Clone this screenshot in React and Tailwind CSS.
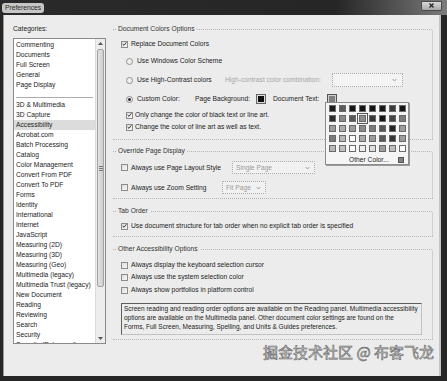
import React from 'react';

const topCats = ['Commenting', 'Documents', 'Full Screen', 'General', 'Page Display'];
const moreCats = [
  '3D & Multimedia', '3D Capture', 'Accessibility', 'Acrobat.com', 'Batch Processing', 'Catalog',
  'Color Management', 'Convert From PDF', 'Convert To PDF', 'Forms', 'Identity', 'International',
  'Internet', 'JavaScript', 'Measuring (2D)', 'Measuring (3D)', 'Measuring (Geo)', 'Multimedia (legacy)',
  'Multimedia Trust (legacy)', 'New Document', 'Reading', 'Reviewing', 'Search', 'Security', 'Security (Enhanced)',
];

// grayscale palette, 5 rows x 8 cols
const swatches = [
  ['#1c1c1c', '#5c5c5c', '#141414', '#161616', '#141414', '#181818', '#3c3c3c', '#161616'],
  ['#2c2c2c', '#8a8a8a', '#575757', '#8e8e8e', '#363636', '#141414', '#464646', '#7c7c7c'],
  ['#9c9c9c', '#ababab', '#9a9a9a', '#8a8a8a', '#7a7a7a', '#555555', '#242424', '#9c9c9c'],
  ['#7a7a7a', '#b7b7b7', '#fafafa', '#ababab', '#9a9a9a', '#585858', '#363636', '#9c9c9c'],
  ['#b7b7b7', '#bfbfbf', '#fafafa', '#eeeeee', '#dddddd', '#9c9c9c', '#bdbdbd', '#fafafa'],
];

const Check = ({ checked }) => (
  <span className="w-[7px] h-[7px] shrink-0 border border-[#8c8c8c] bg-gradient-to-br from-[#dedede] to-[#f7f7f7] flex items-center justify-center">
    {checked && (
      <svg width="6" height="6" viewBox="0 0 6 6">
        <path d="M0.8 3 L2.4 4.6 L5.3 0.9" fill="none" stroke="#2a2a2a" strokeWidth="1.1" />
      </svg>
    )}
  </span>
);

const Radio = ({ on }) => (
  <span className="w-[7px] h-[7px] shrink-0 rounded-full border border-[#8e8e8e] bg-[#f0f0f0] flex items-center justify-center">
    {on && <span className="w-[3px] h-[3px] rounded-full bg-[#2a2a2a]" />}
  </span>
);

const Chevron = () => (
  <svg width="5" height="4" viewBox="0 0 5 4">
    <path d="M0.6 1 L2.5 3 L4.4 1" fill="none" stroke="#9a9a9a" strokeWidth="0.9" />
  </svg>
);

const Select = ({ w, label }) => (
  <div className={`${w} h-[13px] border border-dotted border-[#a9a9a9] bg-[#f1f1f1] rounded-[1px] flex items-center justify-between pl-[3px] pr-[4px] text-[#9b9b9b]`}>
    <span>{label}</span>
    <Chevron />
  </div>
);

export default function App() {
  return (
    <div className="w-[447px] h-[381px] bg-[#262626] flex flex-col overflow-hidden font-['Liberation_Sans','Arial',sans-serif] text-[6.7px] leading-[10px] text-[#222]">
      {/* title bar */}
      <div className="h-[15px] shrink-0 flex items-center justify-between pl-[2px] pr-[5px] bg-gradient-to-r from-[#2a2a2a] via-[#262626] via-75% to-[#7c7c7c]">
        <div className="h-[10px] px-[3px] rounded-[3px] bg-[#c6c6c6] text-[#2a2a2a]">Preferences</div>
        <div className="w-[21px] h-[10px] -mt-[4px] bg-gradient-to-b from-[#d8d8d8] to-[#a8a8a8] border border-[#4a4a4a] rounded-b-[2px] flex items-center justify-center">
          <svg width="5" height="5" viewBox="0 0 5 5">
            <path d="M0.5 0.5 L4.5 4.5 M4.5 0.5 L0.5 4.5" stroke="#222" strokeWidth="1.2" />
          </svg>
        </div>
      </div>

      {/* dialog body */}
      <div className="flex-1 flex ml-[3px] mr-[6px] mb-[5px] pt-[9px] pl-[9px] bg-[#ececec] border-l border-[#9c9c9c] border-r-2 border-r-[#c4c4c4] relative">
        {/* categories */}
        <div className="w-[93px] shrink-0 flex flex-col">
          <div>Categories:</div>
          <div className="mt-[4px] h-[306px] border border-[#8a8a8a] bg-white flex overflow-hidden">
            <div className="flex-1 pt-[1px] overflow-hidden">
              {topCats.map((c) => (
                <div key={c} className="h-[10px] pl-[2px] whitespace-nowrap">{c}</div>
              ))}
              <div className="mt-[7px] mb-[2px] mx-[2px] h-px bg-[#acacac]" />
              {moreCats.map((c) => (
                <div key={c} className={`h-[10px] pl-[2px] whitespace-nowrap ${c === 'Accessibility' ? 'bg-[#dcdcdc]' : ''}`}>{c}</div>
              ))}
            </div>
            <div className="w-[10px] shrink-0 border-l border-[#dadada] bg-[#ededed] flex flex-col">
              <div className="h-[9px] flex items-center justify-center">
                <svg width="5" height="3" viewBox="0 0 5 3"><path d="M0 3 L2.5 0 L5 3 Z" fill="#555" /></svg>
              </div>
              <div className="mt-[1px] mx-[1px] h-[238px] rounded-[2px] border border-[#a2a2a2] bg-gradient-to-r from-[#e2e2e2] to-[#cfcfcf] flex flex-col items-center justify-center gap-[1px]">
                <span className="w-[4px] h-px bg-[#777]" />
                <span className="w-[4px] h-px bg-[#777]" />
                <span className="w-[4px] h-px bg-[#777]" />
              </div>
              <div className="flex-1" />
              <div className="h-[9px] flex items-center justify-center">
                <svg width="5" height="3" viewBox="0 0 5 3"><path d="M0 0 L2.5 3 L5 0 Z" fill="#555" /></svg>
              </div>
            </div>
          </div>
        </div>

        {/* options */}
        <div className="w-[320px] ml-[7px] flex flex-col relative">
          <fieldset className="border-t border-r border-b border-dotted border-[#b4b4b4] rounded-tr-[3px] pb-[7px]">
            <legend className="ml-[3px] px-[2px] text-[#333]">Document Colors Options</legend>
            <div className="mt-[5px] pl-[8px] h-[10px] flex items-center gap-[3px]">
              <Check checked />
              <span>Replace Document Colors</span>
            </div>
            <div className="mt-[7px] pl-[13px] h-[10px] flex items-center gap-[4px]">
              <Radio />
              <span>Use Windows Color Scheme</span>
            </div>
            <div className="mt-[7px] pl-[13px] h-[14px] flex items-center">
              <Radio />
              <span className="ml-[4px] w-[88px]">Use High-Contrast colors</span>
              <span className="w-[107px] text-[#a6a6a6]">High-contrast color combination:</span>
              <div className="w-[71px] h-[14px] border border-dotted border-[#a9a9a9] bg-[#f3f3f3] flex items-center justify-end pr-[5px]">
                <Chevron />
              </div>
            </div>
            <div className="mt-[7px] pl-[13px] h-[10px] flex items-center">
              <Radio on />
              <span className="ml-[4px] w-[58px]">Custom Color:</span>
              <span className="w-[61px]">Page Background:</span>
              <span className="w-[10px] h-[10px] border border-[#666] bg-[#111] shadow-[inset_0_0_0_1px_#ddd]" />
              <span className="ml-[7px] w-[54px]">Document Text:</span>
              <span className="w-[10px] h-[10px] border border-[#555] bg-[#808080] shadow-[inset_0_0_0_1px_#cfcfcf]" />
            </div>
            <div className="mt-[6px] pl-[13px] h-[10px] flex items-center gap-[2px]">
              <Check checked />
              <span>Only change the color of black text or line art.</span>
            </div>
            <div className="mt-[2px] pl-[13px] h-[10px] flex items-center gap-[2px]">
              <Check checked />
              <span>Change the color of line art as well as text.</span>
            </div>
          </fieldset>

          <fieldset className="mt-[6px] border-t border-r border-b border-dotted border-[#b4b4b4] rounded-tr-[3px] pb-[4px]">
            <legend className="ml-[3px] px-[2px] text-[#333]">Override Page Display</legend>
            <div className="mt-[5px] pl-[8px] h-[13px] flex items-center">
              <Check />
              <span className="ml-[3px] w-[101px]">Always use Page Layout Style</span>
              <Select w="w-[83px]" label="Single Page" />
            </div>
            <div className="mt-[7px] pl-[8px] h-[13px] flex items-center">
              <Check />
              <span className="ml-[3px] w-[91px]">Always use Zoom Setting</span>
              <Select w="w-[44px]" label="Fit Page" />
            </div>
          </fieldset>

          <fieldset className="mt-[7px] border-t border-r border-b border-dotted border-[#b4b4b4] rounded-tr-[3px] pb-[5px]">
            <legend className="ml-[3px] px-[2px] text-[#333]">Tab Order</legend>
            <div className="mt-[5px] pl-[8px] h-[10px] flex items-center gap-[3px]">
              <Check checked />
              <span>Use document structure for tab order when no explicit tab order is specified</span>
            </div>
          </fieldset>

          <fieldset className="mt-[7px] border-t border-r border-b border-dotted border-[#b4b4b4] rounded-tr-[3px] pb-[4px]">
            <legend className="ml-[3px] px-[2px] text-[#333]">Other Accessibility Options</legend>
            <div className="mt-[6px] pl-[8px] h-[10px] flex items-center gap-[3px]">
              <Check />
              <span>Always display the keyboard selection cursor</span>
            </div>
            <div className="mt-[2px] pl-[8px] h-[10px] flex items-center gap-[3px]">
              <Check />
              <span>Always use the system selection color</span>
            </div>
            <div className="mt-[3px] pl-[8px] h-[10px] flex items-center gap-[3px]">
              <Check />
              <span>Always show portfolios in platform control</span>
            </div>
            <div className="mt-[8px] ml-[8px] w-[301px] h-[32px] border-t border-l border-[#5e5e5e] border-r border-b border-r-[#c2c2c2] border-b-[#c2c2c2] pl-[2px] pt-[1px] text-[6.5px] leading-[8.8px] whitespace-nowrap">
              Screen reading and reading order options are available on the Reading panel. Multimedia accessibility<br />
              options are available on the Multimedia panel. Other document color settings are found on the<br />
              Forms, Full Screen, Measuring, Spelling, and Units &amp; Guides preferences.
            </div>
          </fieldset>

          {/* colour picker popup */}
          <div className="absolute left-[212px] top-[78px] w-[84px] h-[63px] bg-[#f5f5f5] border border-[#8c8c8c] shadow-[1px_1px_0_#9a9a9a] pt-[2px] pl-[3px]">
            <div className="grid grid-cols-[repeat(8,7px)] gap-[3px]">
              {swatches.flat().map((c, i) => (
                <span
                  key={i}
                  className={`w-[7px] h-[7px] border border-[#6a6a6a] ${i === 11 ? 'outline outline-1 outline-offset-1 outline-[#555]' : ''}`}
                  style={{ background: c }}
                />
              ))}
            </div>
            <div className="mt-[3px] h-[10px] flex items-center">
              <span className="ml-[20px] w-[49px]">Other Color...</span>
              <span className="w-[6px] h-[6px] border border-[#555] bg-[#808080]" />
            </div>
          </div>
        </div>

        {/* watermark */}
        <div className="absolute right-[5px] top-[328px] text-[15px] leading-[18px] text-[#d6d6d6] [-webkit-text-stroke:0.6px_#6a6a6a] font-['Noto_Sans_CJK_SC',sans-serif] whitespace-nowrap">
          掘金技术社区 @ 布客飞龙
        </div>
      </div>
    </div>
  );
}
